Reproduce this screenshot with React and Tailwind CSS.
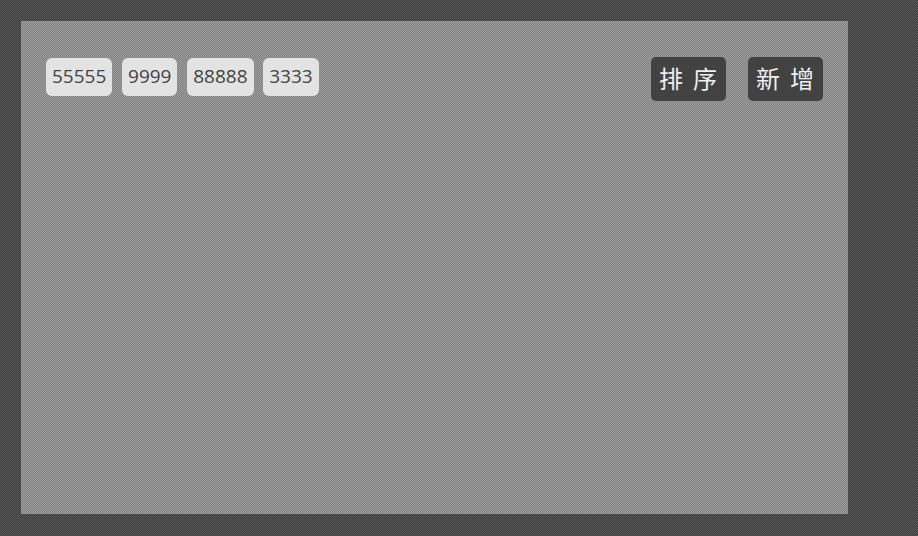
export default function App() {
  const tags = ["55555", "9999", "88888", "3333"];
  return (
    <div className="h-[536px] w-[918px] overflow-hidden bg-[repeating-conic-gradient(#3f3f3f_0_25%,#565656_0_50%)] bg-[length:2px_2px] pt-[21px] pl-[21px]">
      <div className="flex h-[493px] w-[827px] items-start justify-between bg-[repeating-conic-gradient(#848484_0_25%,#9a9a9a_0_50%)] bg-[length:2px_2px] pt-[36px] pr-[25px] pl-[25px] font-['Open_Sans','Noto_Sans_CJK_SC',sans-serif]">
        <div className="mt-px flex gap-[9.7px]">
          {tags.map((t) => (
            <div key={t} className="flex h-[38px] items-center rounded-md bg-[#e3e3e3] px-[6px] pb-px text-[19px] text-[#444444]">
              {t}
            </div>
          ))}
        </div>
        <div className="flex gap-[22px]">
          {["排 序", "新 增"].map((t) => (
            <div key={t} className="flex h-[44px] w-[75px] items-center justify-center rounded-[5px] bg-[#424242] pl-px text-[24px] tracking-[2px] whitespace-pre text-[#efefef]">
              {t}
            </div>
          ))}
        </div>
      </div>
    </div>
  );
}
